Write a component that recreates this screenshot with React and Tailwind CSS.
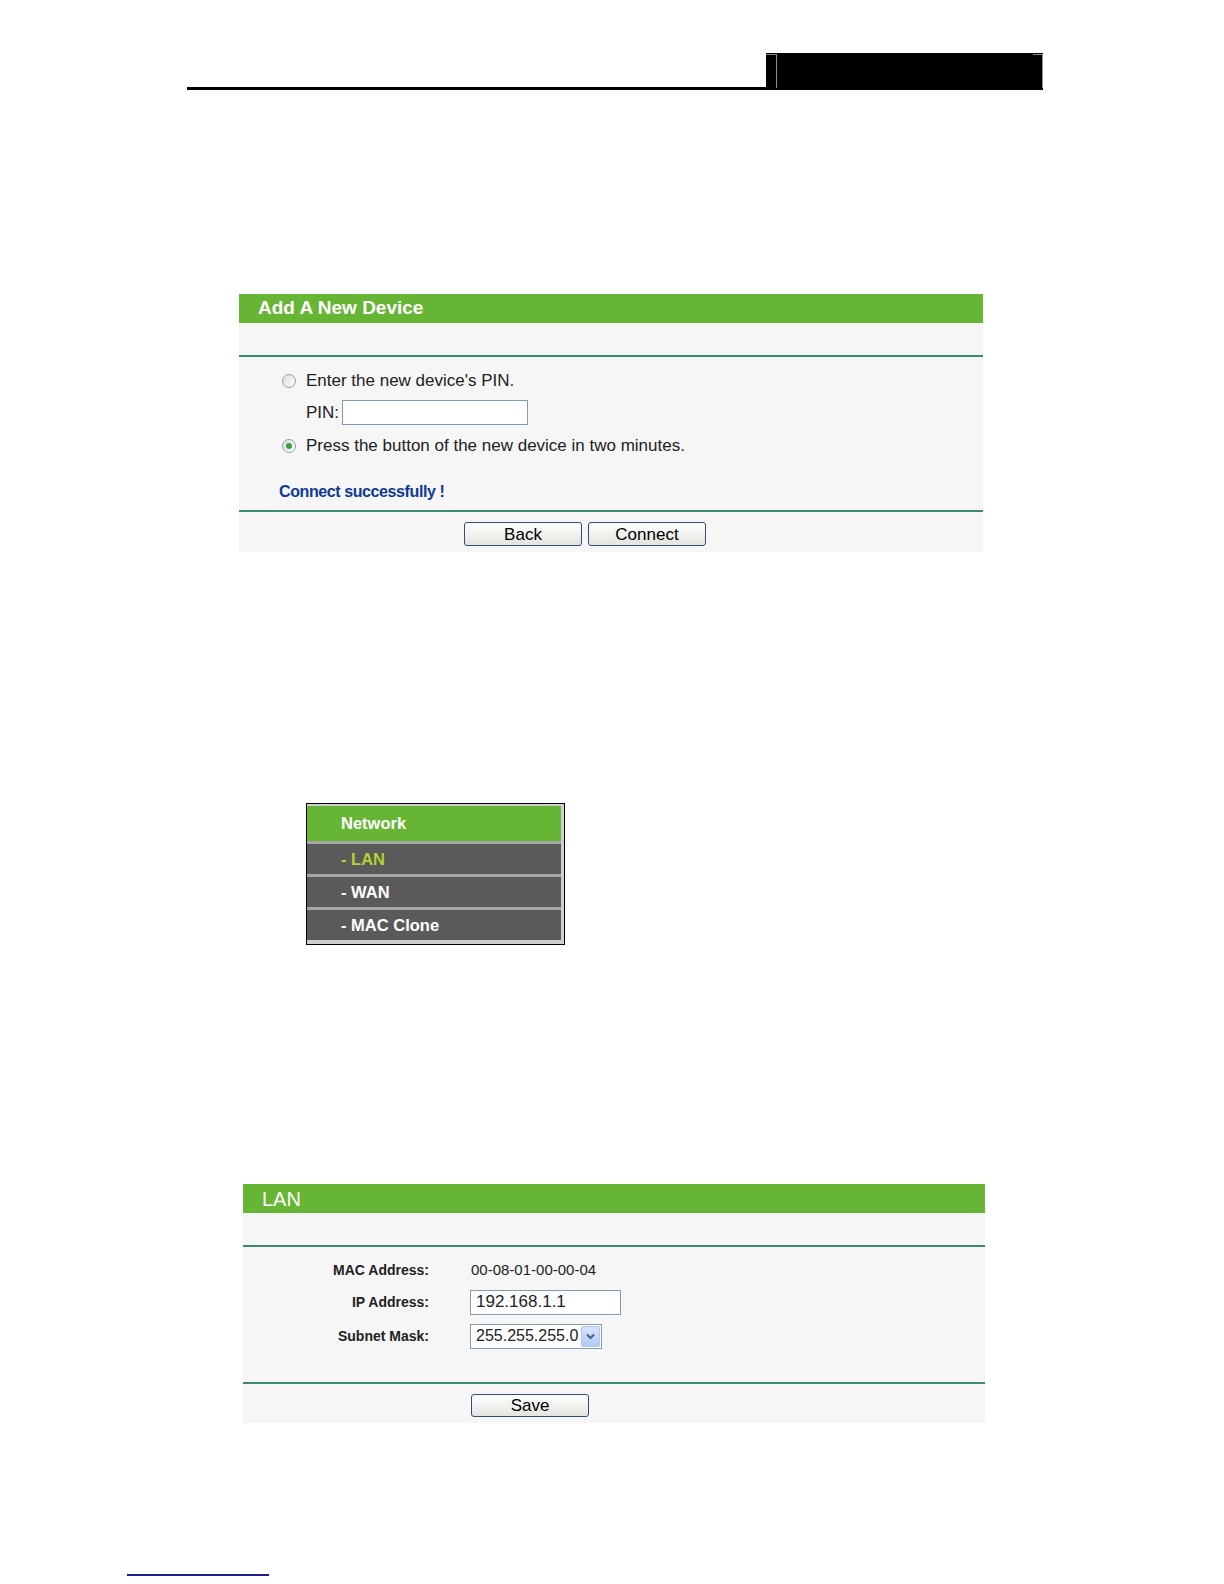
import React from "react";

function Radio({ checked }) {
  return (
    <span className="w-[14px] h-[14px] rounded-full border border-[#8aa0b8] bg-linear-to-br from-[#dcdcd6] to-white flex items-center justify-center shrink-0">
      {checked && <span className="w-[6px] h-[6px] rounded-full bg-[#3a9e3a]" />}
    </span>
  );
}

function XpButton({ children, className = "" }) {
  return (
    <button
      type="button"
      className={`w-[118px] border border-[#2f4f78] rounded-[3px] bg-linear-to-b from-white to-[#e4e4de] text-[17px] leading-none text-black flex items-center justify-center ${className}`}
    >
      {children}
    </button>
  );
}

function Divider() {
  return <div className="h-[2px] bg-[#3d8a70]" />;
}

export default function App() {
  return (
    <div className="w-[1224px] min-h-[1584px] bg-white text-black font-['Liberation_Sans',Arial,sans-serif]">
      {/* Page header */}
      <div className="pt-[53px] pl-[187px] flex">
        <div className="w-[579px] h-[37px] border-b-[3px] border-black" />
        <div className="w-[277px] h-[37px] bg-black flex pt-[1px]">
          <div className="w-[11px] h-[34px] border-t border-r border-[#8a8a8a]" />
          <div className="flex-1" />
          <div className="w-[10px] h-[34px] border-t border-r border-[#8a8a8a]" />
        </div>
      </div>

      {/* Add A New Device */}
      <section className="mt-[204px] ml-[239px] w-[744px] bg-[#f6f6f6]">
        <div className="h-[29px] bg-[#66b534] flex items-center pl-[19px] text-white font-bold text-[19px]">
          Add A New Device
        </div>
        <div className="h-[32px]" />
        <Divider />
        <div className="h-[8px]" />
        <div className="h-[32px] flex items-center pl-[43px] gap-[10px] text-[17px] text-[#222]">
          <Radio />
          <span>Enter the new device's PIN.</span>
        </div>
        <div className="h-[31px] flex items-center pl-[67px] text-[17px] text-[#222]">
          <span>PIN:</span>
          <input
            type="text"
            className="ml-[3px] w-[186px] h-[25px] border border-[#7f9db9] bg-white outline-none"
          />
        </div>
        <div className="h-[36px] flex items-center pl-[43px] gap-[10px] text-[17px] text-[#222]">
          <Radio checked />
          <span>Press the button of the new device in two minutes.</span>
        </div>
        <div className="h-[16px]" />
        <div className="h-[24px] flex items-center pl-[40px] text-[16px] font-bold tracking-[-0.4px] text-[#0d3a94]">
          Connect successfully !
        </div>
        <div className="h-[6px]" />
        <Divider />
        <div className="pt-[10px] pb-[6px] pl-[225px] flex gap-[6px]">
          <XpButton className="h-[24px]">Back</XpButton>
          <XpButton className="h-[24px]">Connect</XpButton>
        </div>
      </section>

      {/* Network menu */}
      <nav className="mt-[251px] ml-[306px] w-[259px] border border-black bg-[#cfcfcf] pt-[2px] pb-[4px] pr-[3px] text-[16.5px] font-bold">
        <div className="h-[35px] bg-[#66b534] flex items-center pl-[34px] text-white">Network</div>
        {[
          { label: "- LAN", active: true },
          { label: "- WAN" },
          { label: "- MAC Clone" },
        ].map((item) => (
          <div
            key={item.label}
            className={`h-[33px] border-t-[3px] border-[#a6a6a6] bg-[#5a5a5a] flex items-center pl-[34px] ${
              item.active ? "text-[#b2d235]" : "text-white"
            }`}
          >
            {item.label}
          </div>
        ))}
      </nav>

      {/* LAN */}
      <section className="mt-[239px] ml-[243px] w-[742px] bg-[#f6f6f6]">
        <div className="h-[29px] bg-[#66b534] flex items-center pl-[19px] text-white text-[20px]">LAN</div>
        <div className="h-[32px]" />
        <Divider />
        <div className="pt-[10px]">
          <div className="h-[26px] flex items-center">
            <span className="w-[186px] text-right text-[14px] font-bold text-[#222]">MAC Address:</span>
            <span className="ml-[42px] text-[15px] text-[#222]">00-08-01-00-00-04</span>
          </div>
          <div className="mt-[6px] h-[26px] flex items-center">
            <span className="w-[186px] text-right text-[14px] font-bold text-[#222]">IP Address:</span>
            <div className="ml-[41px] w-[151px] h-[25px] border border-[#7f9db9] bg-white flex items-center pl-[5px] text-[17px] text-[#222]">
              192.168.1.1
            </div>
          </div>
          <div className="mt-[8px] h-[26px] flex items-center">
            <span className="w-[186px] text-right text-[14px] font-bold text-[#222]">Subnet Mask:</span>
            <div className="ml-[41px] w-[132px] h-[25px] border border-[#7f9db9] bg-white flex items-center pl-[5px] pr-[1px] text-[16px] text-[#222]">
              <span className="flex-1">255.255.255.0</span>
              <span className="w-[19px] h-[21px] rounded-[2px] border border-[#b4c6ef] bg-linear-to-b from-[#d6e2fd] to-[#b5c9f7] flex items-center justify-center">
                <svg width="9" height="7" viewBox="0 0 9 7">
                  <polyline points="1,1.5 4.5,5 8,1.5" fill="none" stroke="#4d6185" strokeWidth="2" />
                </svg>
              </span>
            </div>
          </div>
        </div>
        <div className="h-[33px]" />
        <Divider />
        <div className="pt-[10px] pb-[6px] pl-[228px]">
          <XpButton className="h-[23px]">Save</XpButton>
        </div>
      </section>

      {/* Footer link rule */}
      <div className="mt-[151px] ml-[127px] w-[142px] h-[2px] bg-[#1f1f8c]" />
      <div className="h-[8px]" />
    </div>
  );
}
